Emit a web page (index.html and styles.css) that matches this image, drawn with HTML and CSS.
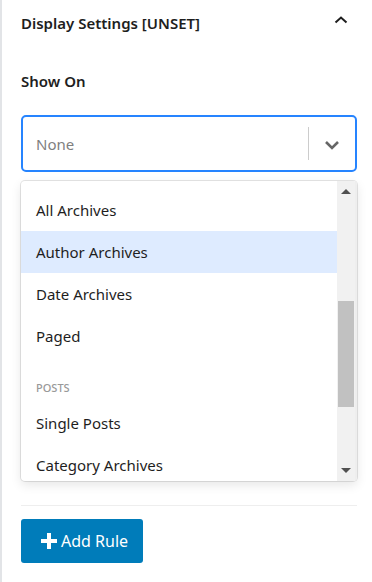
FILE: index.html
```html
<!DOCTYPE html>
<html lang="en">
  <head>
    <meta charset="UTF-8" />
    <title>Display Settings</title>
    <link rel="stylesheet" href="styles.css">
  </head>
  <body>
    <div class="panel">
      <div class="panel-header">
        <h2>Display Settings [UNSET]</h2>
        <svg class="toggle" width="14" height="8" viewBox="0 0 14 8">
          <path d="M1.5 6.5 L7 1.5 L12.5 6.5" fill="none" stroke="#1e1e1e" stroke-width="2" />
        </svg>
      </div>

      <label class="field-label">Show On</label>

      <div class="select">
        <div class="select-value">None</div>
        <span class="select-sep"></span>
        <div class="select-arrow">
          <svg width="16" height="10" viewBox="0 0 16 10">
            <path d="M2 2 L8 8 L14 2" fill="none" stroke="#666" stroke-width="2.6" />
          </svg>
        </div>
      </div>

      <div class="menu">
        <div class="menu-list">
          <div class="option">All Archives</div>
          <div class="option focused">Author Archives</div>
          <div class="option">Date Archives</div>
          <div class="option">Paged</div>
          <div class="group-heading">Posts</div>
          <div class="option">Single Posts</div>
          <div class="option">Category Archives</div>
        </div>
        <div class="scrollbar">
          <span class="arrow-up"></span>
          <div class="track"><div class="thumb"></div></div>
          <span class="arrow-down"></span>
        </div>
      </div>

      <hr class="divider" />

      <button class="add-rule">
        <svg width="16" height="16" viewBox="0 0 16 16">
          <path d="M6 0h4v6h6v4h-6v6h-4v-6h-6v-4h6z" fill="#fff" />
        </svg>
        Add Rule
      </button>
    </div>
  </body>
</html>
```

FILE: styles.css
```css
:root {
  --text-color: #1e1e1e;
  --focus-color: #2684ff;
  --button-color: #007cba;
  --border-color: #e2e4e7;
}
body {
  margin: 0;
  font-family: "Noto Sans", "Open Sans", sans-serif;
  color: var(--text-color);
  background: #fff;
}
.panel {
  border-left: 2px solid var(--border-color);
  padding: 0 15px 0 19px;
  min-height: 582px;
  box-sizing: border-box;
}
.panel-header {
  display: flex;
  justify-content: space-between;
  align-items: center;
  height: 46px;
}
.panel-header h2 {
  margin: 0;
  font-size: 15px;
  font-weight: 600;
}
.toggle {
  margin-right: 9px;
  margin-top: -6px;
}
.field-label {
  display: block;
  margin-top: 25px;
  font-size: 15px;
  font-weight: 600;
  line-height: 20px;
}
.select {
  display: flex;
  align-items: center;
  margin-top: 24px;
  height: 57px;
  border: 2px solid var(--focus-color);
  border-radius: 5px;
  box-sizing: border-box;
}
.select-value {
  flex: 1;
  padding-left: 13px;
  font-size: 15px;
  color: #808080;
}
.select-sep {
  width: 1px;
  height: 33px;
  background: #ccc;
}
.select-arrow {
  width: 46px;
  display: flex;
  justify-content: center;
  padding-top: 2px;
}
.menu {
  display: flex;
  margin-top: 9px;
  height: 300px;
  border-radius: 4px;
  box-shadow: 0 0 0 1px rgba(0, 0, 0, 0.1), 0 4px 11px rgba(0, 0, 0, 0.1);
  overflow: hidden;
}
.menu-list {
  flex: 1;
  padding-top: 8px;
  overflow: hidden;
}
.option {
  height: 42px;
  line-height: 42px;
  padding-left: 15px;
  font-size: 15px;
}
.option.focused {
  background: #deebff;
}
.group-heading {
  padding: 24px 0 7px 15px;
  font-size: 11px;
  font-weight: 500;
  line-height: 14px;
  text-transform: uppercase;
  color: #999;
}
.scrollbar {
  width: 18px;
  background: #f1f1f1;
  display: flex;
  flex-direction: column;
  align-items: center;
  border-right: 2px solid #eee;
}
.arrow-up,
.arrow-down {
  width: 0;
  height: 0;
  border-left: 5px solid transparent;
  border-right: 5px solid transparent;
  margin: 8px 0;
}
.arrow-up {
  border-bottom: 5px solid #505050;
}
.arrow-down {
  border-top: 5px solid #505050;
}
.track {
  flex: 1;
  width: 100%;
  padding-top: 99px;
}
.thumb {
  height: 106px;
  margin: 0 1px;
  background: #c1c1c1;
}
.divider {
  margin: 24px 0 13px;
  border: 0;
  border-top: 1px solid #eee;
}
.add-rule {
  display: flex;
  align-items: center;
  gap: 4px;
  height: 44px;
  padding: 0 15px 0 20px;
  border: 0;
  border-radius: 3px;
  background: var(--button-color);
  color: #fff;
  font-family: inherit;
  font-size: 16px;
}
```
